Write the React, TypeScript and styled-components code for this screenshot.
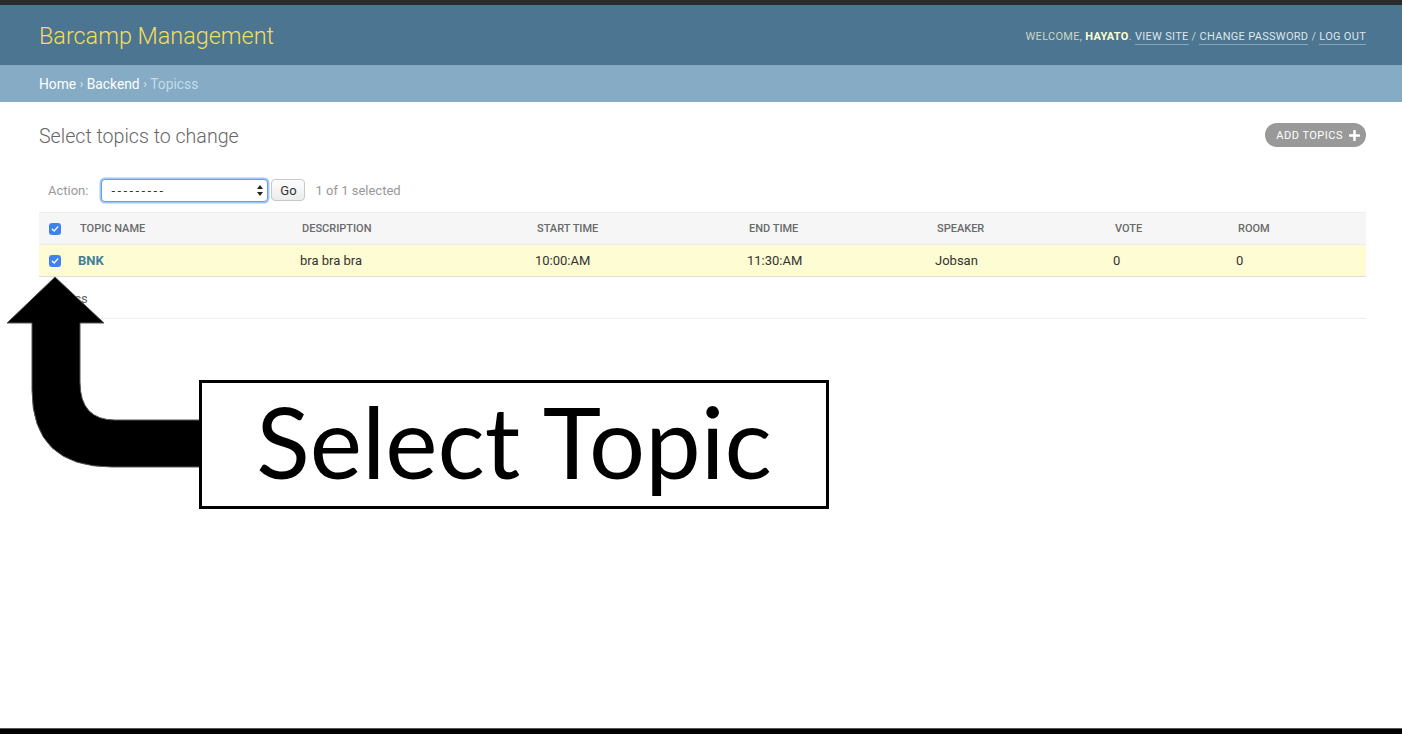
import React from "react";
import styled, { createGlobalStyle } from "styled-components";

const Global = createGlobalStyle`
  html, body { margin: 0; padding: 0; background: #fff; }
  body { font-family: Roboto, "Liberation Sans", sans-serif; }
  * { box-sizing: border-box; }
`;

const Page = styled.div`
  position: relative;
  display: flex;
  flex-direction: column;
  min-height: 734px;
  height: 734px;
  overflow: hidden;
  background: #fff;
`;

const TopStrip = styled.div`
  height: 5px;
  background: #2b2b2b;
`;

const Header = styled.header`
  height: 60px;
  background: #4b7590;
  display: flex;
  align-items: center;
  justify-content: space-between;
  padding: 0 36px 0 39px;
`;

const Branding = styled.h1`
  margin: 0;
  font-family: Roboto, sans-serif;
  font-weight: 300;
  font-size: 23.4px;
  color: #f5dd5d;
  padding-top: 1px;
`;

const UserTools = styled.div`
  font-size: 11px;
  letter-spacing: 0.3px;
  text-transform: uppercase;
  color: #ccd6c4;
  padding-top: 2px;
`;

const Strong = styled.strong`
  color: #ffffd0;
  font-weight: 700;
`;

const ToolLink = styled.a`
  color: #dfe6ea;
  text-decoration: none;
  border-bottom: 1px solid rgba(255, 255, 255, 0.35);
  padding-bottom: 1px;
`;

const Crumbs = styled.div`
  height: 37px;
  background: #85abc5;
  display: flex;
  align-items: center;
  padding: 0 39px;
  font-size: 13.8px;
  color: #c4dce8;
`;

const CrumbLink = styled.a`
  color: #fff;
  text-decoration: none;
`;

const Sep = styled.span`
  color: #dbe9f1;
  margin: 0 3.5px;
  font-size: 12px;
`;

const Content = styled.main`
  flex: 1;
  padding: 20px 36px 0 39px;
`;

const TitleRow = styled.div`
  display: flex;
  justify-content: space-between;
  align-items: flex-start;
  height: 56px;
`;

const PageTitle = styled.h2`
  margin: 3px 0 0;
  font-weight: 300;
  font-size: 19.6px;
  color: #666;
`;

const AddButton = styled.a`
  display: inline-flex;
  align-items: center;
  gap: 6px;
  height: 24px;
  margin-top: 1px;
  padding: 0 6px 0 11px;
  border-radius: 15px;
  background: #999;
  color: #fff;
  font-size: 11px;
  letter-spacing: 0.5px;
  text-transform: uppercase;
  text-decoration: none;
`;

const ActionBar = styled.div`
  display: flex;
  align-items: center;
  height: 24px;
  padding-left: 9px;
  font-size: 13px;
  color: #999;
  margin-bottom: 10px;
`;

const ActionLabel = styled.span`
  margin-right: 13px;
`;

const SelectBox = styled.div`
  width: 167px;
  height: 23px;
  border: 1px solid #6f9ee8;
  box-shadow: 0 0 0 1.5px rgba(90, 150, 240, 0.55);
  border-radius: 4px;
  background: #fff;
  display: flex;
  align-items: center;
  justify-content: space-between;
  padding: 0 3px 0 9px;
  color: #333;
  font-size: 13px;
  letter-spacing: 2.4px;
`;

const GoButton = styled.button`
  margin-left: 3px;
  width: 34px;
  height: 22px;
  border: 1px solid #c8c8c8;
  border-radius: 4px;
  background: linear-gradient(#fdfdfd, #ececec);
  font-family: Roboto, sans-serif;
  font-size: 13px;
  color: #333;
  padding: 0;
`;

const Counter = styled.span`
  margin-left: 10px;
  color: #999;
`;

const Grid = styled.div`
  display: grid;
  grid-template-columns: 31px 222px 235px 212px 188px 178px 123px 138px;
`;

const HeadRow = styled(Grid)`
  height: 32px;
  background: #f6f6f6;
  border-top: 1px solid #eee;
  align-items: center;
`;

const BodyRow = styled(Grid)`
  height: 33px;
  background: #fdfcd2;
  border-top: 1px solid #ececec;
  border-bottom: 1px solid #ddd;
  align-items: center;
`;

const Th = styled.div`
  padding-left: 10px;
  font-size: 11px;
  font-weight: 500;
  color: #6a6a6a;
  text-transform: uppercase;
`;

const Td = styled.div<{ $link?: boolean }>`
  padding-left: 8px;
  font-size: 13px;
  padding-bottom: 1px;
  color: ${(p) => (p.$link ? "#447e9b" : "#333")};
  font-weight: ${(p) => (p.$link ? 700 : 400)};
`;

const CheckCell = styled.div`
  padding-left: 10px;
  display: flex;
  align-items: center;
`;

const Check = styled.span`
  width: 12px;
  height: 12px;
  border-radius: 3px;
  background: #3d82f0;
  display: inline-flex;
  align-items: center;
  justify-content: center;
`;

const Paginator = styled.div`
  height: 42px;
  display: flex;
  align-items: center;
  font-size: 13px;
  color: #666;
  border-bottom: 1px solid #eee;
  padding-top: 2px;
`;

const BottomStrip = styled.div`
  height: 6px;
  background: #000;
  border-top: 1px solid #555;
`;

const ArrowSvg = styled.svg`
  position: absolute;
  left: 0;
  top: 0;
  pointer-events: none;
`;

const Callout = styled.div`
  position: absolute;
  left: 199px;
  top: 380px;
  width: 630px;
  height: 129px;
  border: 3px solid #000;
  background: #fff;
  display: flex;
  align-items: center;
  justify-content: center;
  font-family: Lato, "Noto Sans", sans-serif;
  font-weight: 400;
  font-size: 99px;
  color: #000;
  padding-bottom: 8px;
`;

const CheckMark = () => (
  <svg width="8" height="8" viewBox="0 0 8 8">
    <path d="M1.3 4.2 L3.2 6 L6.8 1.8" fill="none" stroke="#fff" strokeWidth="1.3" strokeLinecap="round" strokeLinejoin="round" />
  </svg>
);

const columns = ["Topic name", "Description", "Start time", "End time", "Speaker", "Vote", "Room"];

export default function App() {
  return (
    <>
      <Global />
      <Page>
        <TopStrip />
        <Header>
          <Branding>Barcamp Management</Branding>
          <UserTools>
            Welcome, <Strong>Hayato</Strong>. <ToolLink>View site</ToolLink> / <ToolLink>Change password</ToolLink> /{" "}
            <ToolLink>Log out</ToolLink>
          </UserTools>
        </Header>
        <Crumbs>
          <CrumbLink>Home</CrumbLink>
          <Sep>›</Sep>
          <CrumbLink>Backend</CrumbLink>
          <Sep>›</Sep>
          Topicss
        </Crumbs>
        <Content>
          <TitleRow>
            <PageTitle>Select topics to change</PageTitle>
            <AddButton>
              Add topics
              <svg width="11" height="11" viewBox="0 0 11 11">
                <path d="M5.5 1 V10 M1 5.5 H10" stroke="#fff" strokeWidth="2.6" strokeLinecap="round" />
              </svg>
            </AddButton>
          </TitleRow>
          <ActionBar>
            <ActionLabel>Action:</ActionLabel>
            <SelectBox>
              ---------
              <svg width="8" height="13" viewBox="0 0 8 13">
                <path d="M4 1 L7 5 H1 Z M4 12 L7 8 H1 Z" fill="#222" />
              </svg>
            </SelectBox>
            <GoButton>Go</GoButton>
            <Counter>1 of 1 selected</Counter>
          </ActionBar>
          <HeadRow>
            <CheckCell>
              <Check>
                <CheckMark />
              </Check>
            </CheckCell>
            {columns.map((c) => (
              <Th key={c}>{c}</Th>
            ))}
          </HeadRow>
          <BodyRow>
            <CheckCell>
              <Check>
                <CheckMark />
              </Check>
            </CheckCell>
            <Td $link>BNK</Td>
            <Td>bra bra bra</Td>
            <Td>10:00:AM</Td>
            <Td>11:30:AM</Td>
            <Td>Jobsan</Td>
            <Td>0</Td>
            <Td>0</Td>
          </BodyRow>
          <Paginator>1 Topics</Paginator>
        </Content>
        <BottomStrip />
        <ArrowSvg width="210" height="480" viewBox="0 0 210 480">
          <path
            d="M55 277 L104 323 L80 323 L80 382 Q80 420 115 420 L202 420 L202 467 L112 467 Q32 467 32 390 L32 323 L7 323 Z"
            fill="#000"
            stroke="#555"
            strokeWidth="1"
          />
        </ArrowSvg>
        <Callout>Select Topic</Callout>
      </Page>
    </>
  );
}
